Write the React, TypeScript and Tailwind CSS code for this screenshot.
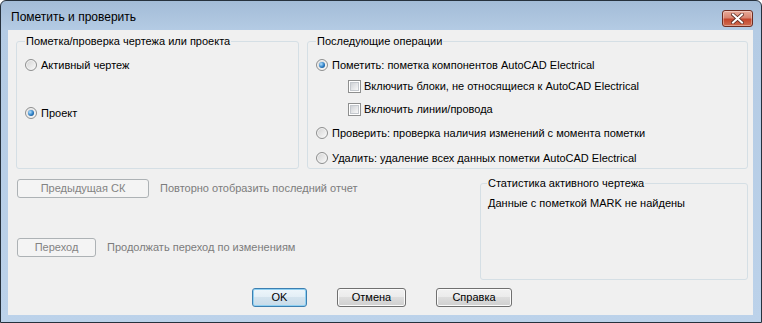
import React from "react";

function Radio({ checked, label }: { checked?: boolean; label: string }) {
    return (
        <div className="flex h-[16px] items-center">
            <span className="flex h-[12px] w-[12px] items-center justify-center rounded-full border border-[#8e8f8f] bg-[linear-gradient(135deg,#d2d2d2,#fbfbfb)] shadow-[inset_0_0_0_1px_#f4f4f4]">
                {checked && (
                    <span className="h-[6px] w-[6px] rounded-full bg-[radial-gradient(circle_at_35%_35%,#b4e2ff,#2a7cc4_55%,#0c3d6e)]" />
                )}
            </span>
            <span className="ml-[4px]">{label}</span>
        </div>
    );
}

function Check({ label }: { label: string }) {
    return (
        <div className="flex h-[16px] items-center pl-[32px]">
            <span className="flex h-[13px] w-[13px] items-center justify-center border border-[#8e8f8f] bg-white">
                <span className="h-[9px] w-[9px] border border-[#c4c8cd] bg-[linear-gradient(135deg,#cfd2d6,#f8f8f8)]" />
            </span>
            <span className="ml-[3px]">{label}</span>
        </div>
    );
}

function DisabledBtn({ w, label }: { w: string; label: string }) {
    return (
        <div className={`flex h-[19px] items-center justify-center rounded-[3px] border border-[#adb2b5] bg-[#f4f4f4] text-[#838383] ${w}`}>
            {label}
        </div>
    );
}

export default function App() {
    return (
        <div className="h-[323px] w-[762px] bg-white font-['Liberation_Sans',Arial,sans-serif] text-[11px] leading-[13px] text-black">
            <div className="flex h-full w-full flex-col rounded-t-[6px] border border-[#26313d] bg-[linear-gradient(#a3bcd7_0px,#b4cbe4_29px,#bcd2ea_100%)]">

                {/* Title bar */}
                <div className="flex h-[29px] items-start justify-between pl-[10px] pr-[8px]">
                    <span className="pt-[9px] text-[12px] leading-[15px]">Пометить и проверить</span>
                    <div className="mt-[9px] flex h-[17px] w-[31px] items-center justify-center rounded-[3px] border border-[#6e2d22] bg-[linear-gradient(#e9ab9a_0%,#d88571_45%,#c4452c_55%,#cf6d50_100%)] shadow-[inset_0_0_0_1px_rgba(255,255,255,0.35)]">
                        <svg width="13" height="11" viewBox="0 0 13 11">
                            <path d="M2 1.5 L11 9.5 M11 1.5 L2 9.5" stroke="#5a2a22" strokeWidth="3.6" strokeLinecap="square" />
                            <path d="M2 1.5 L11 9.5 M11 1.5 L2 9.5" stroke="#ffffff" strokeWidth="2" strokeLinecap="square" />
                        </svg>
                    </div>
                </div>

                {/* Client area */}
                <div className="ml-[7px] flex h-[285px] w-[745px] flex-col bg-[#f0f0f0] pl-[8px] pt-[5px]">

                    <div className="flex h-[134px] gap-[8px]">
                        <fieldset className="w-[283px] rounded-[3px] border border-[#d5dfe5] pl-[8px]">
                            <legend className="px-[1px]">Пометка/проверка чертежа или проекта</legend>
                            <div className="mt-[9px]">
                                <Radio label="Активный чертеж" />
                            </div>
                            <div className="mt-[32px]">
                                <Radio checked label="Проект" />
                            </div>
                        </fieldset>

                        <fieldset className="w-[441px] rounded-[3px] border border-[#d5dfe5] pl-[8px]">
                            <legend className="px-[1px]">Последующие операции</legend>
                            <div className="mt-[9px]">
                                <Radio checked label="Пометить: пометка компонентов AutoCAD Electrical" />
                            </div>
                            <div className="mt-[5px]">
                                <Check label="Включить блоки, не относящиеся к AutoCAD Electrical" />
                            </div>
                            <div className="mt-[7px]">
                                <Check label="Включить линии/провода" />
                            </div>
                            <div className="mt-[8px]">
                                <Radio label="Проверить: проверка наличия изменений с момента пометки" />
                            </div>
                            <div className="mt-[9px]">
                                <Radio label="Удалить: удаление всех данных пометки AutoCAD Electrical" />
                            </div>
                        </fieldset>
                    </div>

                    <div className="mt-[8px] flex h-[103px]">
                        <div className="w-[464px] pl-[1px] pt-[2px] text-[#7c7c7c]">
                            <div className="flex items-center">
                                <DisabledBtn w="w-[132px]" label="Предыдущая СК" />
                                <span className="ml-[11px]">Повторно отобразить последний отчет</span>
                            </div>
                            <div className="mt-[40px] flex items-center">
                                <DisabledBtn w="w-[79px]" label="Переход" />
                                <span className="ml-[11px]">Продолжать переход по изменениям</span>
                            </div>
                        </div>

                        <fieldset className="w-[268px] rounded-[3px] border border-[#d5dfe5] pl-[6px]">
                            <legend className="px-[1px]">Статистика активного чертежа</legend>
                            <div className="ml-[1px] mt-[7px]">Данные с пометкой MARK не найдены</div>
                        </fieldset>
                    </div>

                    <div className="ml-[236px] mt-[8px] flex gap-[30px]">
                        <div className="flex h-[19px] w-[55px] items-center justify-center rounded-[3px] border border-[#3c7fb1] bg-[linear-gradient(#eef6fb_0%,#e2eef6_49%,#d3e3ee_50%,#c8dbe9_100%)] shadow-[inset_0_0_0_1px_#8fd0f2]">
                            OK
                        </div>
                        <div className="flex h-[19px] w-[69px] items-center justify-center rounded-[3px] border border-[#707070] bg-[linear-gradient(#f2f2f2_0%,#ebebeb_49%,#dddddd_50%,#cfcfcf_100%)] shadow-[inset_0_0_0_1px_#fbfbfb]">
                            Отмена
                        </div>
                        <div className="flex h-[19px] w-[76px] items-center justify-center rounded-[3px] border border-[#707070] bg-[linear-gradient(#f2f2f2_0%,#ebebeb_49%,#dddddd_50%,#cfcfcf_100%)] shadow-[inset_0_0_0_1px_#fbfbfb]">
                            Справка
                        </div>
                    </div>
                </div>
            </div>
        </div>
    );
}
